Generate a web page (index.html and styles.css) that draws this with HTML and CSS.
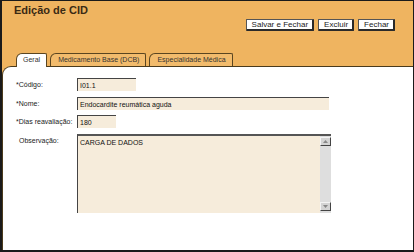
FILE: index.html
```html
<!DOCTYPE html>
<html lang="pt">
<head>
<meta charset="utf-8">
<title>Edição de CID</title>
<link rel="stylesheet" href="styles.css">
</head>
<body>
<div class="win">
  <div class="head">
    <div class="title">Edição de CID</div>
    <div class="actions">
      <button class="btn">Salvar e Fechar</button>
      <button class="btn">Excluir</button>
      <button class="btn">Fechar</button>
    </div>
    <div class="tabs">
      <div class="tab active">Geral</div>
      <div class="tab">Medicamento Base (DCB)</div>
      <div class="tab">Especialidade Médica</div>
    </div>
  </div>
  <div class="body">
    <div class="row">
      <label class="lbl">*Código:</label>
      <div class="inp w-code">I01.1</div>
    </div>
    <div class="row">
      <label class="lbl">*Nome:</label>
      <div class="inp w-name">Endocardite reumática aguda</div>
    </div>
    <div class="row">
      <label class="lbl">*Dias reavaliação:</label>
      <div class="inp w-dias">180</div>
    </div>
    <div class="row top">
      <label class="lbl ind">Observação:</label>
      <div class="area">
        <div class="area-text">CARGA DE DADOS</div>
        <div class="sbar">
          <div class="sbtn">
            <svg width="5" height="3" viewBox="0 0 5 3"><path d="M0 3 L2.5 0 L5 3 Z" fill="#888"/></svg>
          </div>
          <div class="strack"></div>
          <div class="sbtn">
            <svg width="5" height="3" viewBox="0 0 5 3"><path d="M0 0 L2.5 3 L5 0 Z" fill="#888"/></svg>
          </div>
        </div>
      </div>
    </div>
  </div>
</div>
</body>
</html>
```
FILE: styles.css
```css
* { box-sizing: border-box; }
html, body { margin: 0; padding: 0; }
body {
  width: 414px;
  height: 252px;
  font-family: "Liberation Sans", Arial, sans-serif;
  font-size: 7px;
  color: #222;
  background: #fff;
}
.win {
  width: 414px;
  height: 252px;
  border: 1px solid #1a1a1a;
  border-left-width: 2px;
  border-bottom-width: 2px;
  background: #efb460;
  display: flex;
  flex-direction: column;
  overflow: hidden;
}
.head {
  height: 65px;
  flex: none;
  display: flex;
  flex-direction: column;
}
.title {
  font-weight: bold;
  font-size: 11px;
  color: #3a2a14;
  padding: 3px 0 0 12px;
  line-height: 13px;
}
.actions {
  display: flex;
  justify-content: flex-end;
  gap: 4px;
  padding-right: 18px;
  margin-top: 2px;
}
.btn {
  font-family: "Liberation Sans", Arial, sans-serif;
  font-size: 8px;
  color: #222;
  background: #fff;
  border: 1px solid #555;
  border-right: 2px solid #2a2a2a;
  border-bottom: 2px solid #2a2a2a;
  height: 12px;
  line-height: 9px;
  padding: 0 4px 0 5px;
  margin: 0;
  border-radius: 1px;
}
.tabs {
  display: flex;
  gap: 3px;
  margin-top: auto;
  padding-left: 14px;
  height: 13px;
}
.tab {
  height: 13px;
  line-height: 12px;
  font-size: 7px;
  padding: 0 6px 0 7px;
  border: 1px solid #5a4520;
  border-bottom: none;
  border-radius: 6px 2px 0 0;
  background: #f2bb6c;
  color: #333;
  white-space: nowrap;
}
.tab.active {
  background: #fff;
  height: 14px;
  position: relative;
  z-index: 2;
  padding: 0 6px;
}
.body {
  flex: 1;
  background: #fff;
  border-top: 1px solid #4a3a1c;
  border-left: 1px solid #4a3a1c;
  border-top-left-radius: 9px;
  padding: 11px 0 0 13px;
  display: flex;
  flex-direction: column;
  gap: 5px;
}
.row {
  display: flex;
  align-items: center;
  height: 13px;
}
.row + .row { margin-top: 0.5px; }
.row.top {
  align-items: flex-start;
  height: auto;
}
.lbl {
  width: 61px;
  flex: none;
  white-space: nowrap;
  font-size: 7px;
  color: #222;
}
.lbl.ind { padding-left: 3px; padding-top: 3px; }
.inp {
  height: 13px;
  background: #f6ecdb;
  border-top: 1px solid #444;
  border-left: 1px solid #444;
  padding: 1px 0 0 2px;
  line-height: 11px;
  font-size: 7px;
  color: #111;
}
.w-code { width: 59px; }
.w-name { width: 252px; }
.w-dias { width: 39px; }
.area {
  width: 254px;
  height: 79px;
  background: #f6ecdb;
  border-top: 2px solid #555;
  border-left: 1px solid #444;
  display: flex;
}
.area-text {
  flex: 1;
  padding: 2px 0 0 2px;
  font-size: 7px;
  line-height: 10px;
  color: #111;
}
.sbar {
  width: 11px;
  background: #dedede;
  display: flex;
  flex-direction: column;
  padding: 1px 0 2px;
}
.sbtn {
  height: 9px;
  background: #d4d4d4;
  border-right: 1px solid #444;
  border-bottom: 1px solid #444;
  border-top: 1px solid #f4f4f4;
  border-left: 1px solid #f4f4f4;
  display: flex;
  align-items: center;
  justify-content: center;
}
.strack { flex: 1; }
```
